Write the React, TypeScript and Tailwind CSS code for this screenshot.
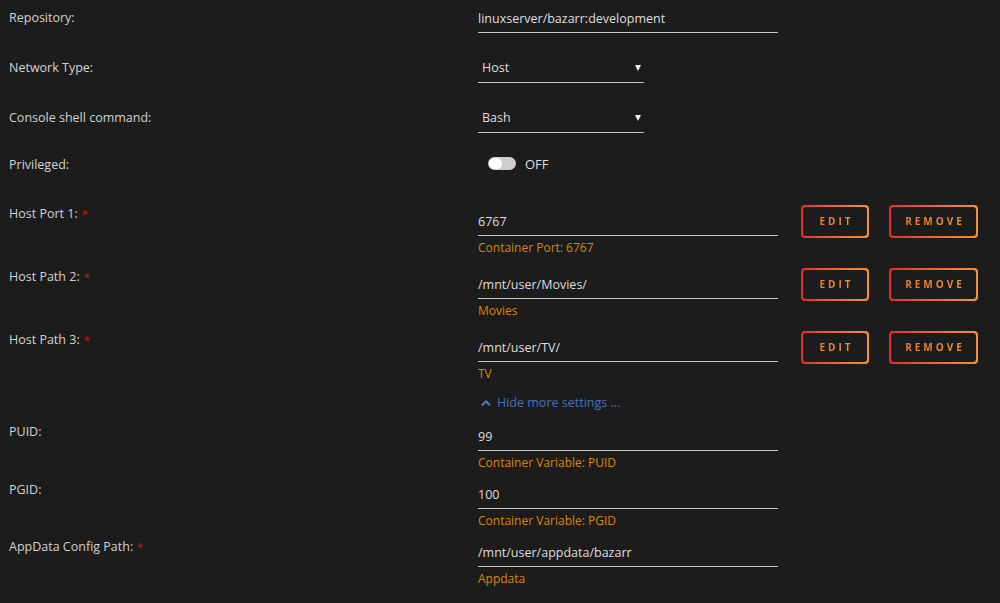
import React from 'react';
import { ChevronUp } from 'lucide-react';

const font = { fontFamily: '"Open Sans", "DejaVu Sans", sans-serif' };

const Label = ({ text, required, className = '' }: { text: string; required?: boolean; className?: string }) => (
  <div className={`w-[478px] shrink-0 pl-[9px] text-[12.5px] leading-[18px] text-[#d2d2d2] ${className}`}>
    {text}
    {required && <span className="ml-[4px] align-top text-[11px] text-[#d11a1a]">*</span>}
  </div>
);

const Field = ({ value, width = 'w-[300px]', hint }: { value: string; width?: string; hint?: string }) => (
  <div className={`${width} shrink-0`}>
    <div className="h-[33px] border-b border-[#c4c4c4] pt-[10px] text-[12.5px] leading-[18px] text-[#dedede]">{value}</div>
    {hint && <div className="mt-[4px] h-[16px] text-[12px] leading-[16px] text-[#d9860b]">{hint}</div>}
  </div>
);

const Select = ({ value }: { value: string }) => (
  <div className="flex h-[33px] w-[166px] shrink-0 items-center justify-between border-b border-[#c4c4c4] pl-[4px] pr-[3px] pt-[5px] text-[12.5px] text-[#dedede]">
    <span>{value}</span>
    <svg width="6" height="6" viewBox="0 0 6 6" className="mb-[2px]">
      <polygon points="0,0 6,0 3,6" fill="#f2f2f2" />
    </svg>
  </div>
);

const OutlineButton = ({ text, width }: { text: string; width: string }) => (
  <div className={`${width} mt-[2px] h-[33px] rounded-[4px] bg-gradient-to-r from-[#e22a2a] to-[#f7922f] p-[2px]`}>
    <div className="flex h-full w-full items-center justify-center rounded-[3px] bg-[#1c1c1c]">
      <span className="bg-gradient-to-r from-[#ee7a2d] to-[#f3912f] bg-clip-text pl-[3px] text-[10px] font-bold tracking-[3px] text-transparent">
        {text}
      </span>
    </div>
  </div>
);

const PortRow = ({ label, value, hint, top }: { label: string; value: string; hint: string; top: string }) => (
  <div className={`flex ${top}`}>
    <Label text={label} required className="pt-[2px]" />
    <Field value={value} hint={hint} />
    <div className="ml-[23px] flex gap-[20px]">
      <OutlineButton text="EDIT" width="w-[68px]" />
      <OutlineButton text="REMOVE" width="w-[89px]" />
    </div>
  </div>
);

export default function App() {
  return (
    <div className="min-h-screen w-[1000px] bg-[#1c1c1c]" style={font}>
      <div className="flex flex-col">
        <div className="flex">
          <Label text="Repository:" className="pt-[9px]" />
          <Field value="linuxserver/bazarr:development" />
        </div>
        <div className="mt-[17px] flex">
          <Label text="Network Type:" className="pt-[9px]" />
          <Select value="Host" />
        </div>
        <div className="mt-[17px] flex">
          <Label text="Console shell command:" className="pt-[9px]" />
          <Select value="Bash" />
        </div>
        <div className="mt-[17px] flex h-[28px] items-center">
          <Label text="Privileged:" className="pt-[2px]" />
          <div className="ml-[10px] flex items-center gap-[9px] pb-[2px]">
            <div className="flex h-[13px] w-[28px] items-center rounded-full bg-[#cfcfcf] p-[1px]">
              <div className="h-[11px] w-[13px] rounded-full bg-white" />
            </div>
            <span className="pt-[4px] text-[13px] text-[#dedede]">OFF</span>
          </div>
        </div>
        <PortRow label="Host Port 1:" value="6767" hint="Container Port: 6767" top="mt-[25px]" />
        <PortRow label="Host Path 2:" value="/mnt/user/Movies/" hint="Movies" top="mt-[10px]" />
        <PortRow label="Host Path 3:" value="/mnt/user/TV/" hint="TV" top="mt-[10px]" />
        <div className="mt-[12px] flex">
          <div className="w-[478px] shrink-0" />
          <div className="flex items-center gap-[4px] pl-[1px] text-[12.5px] leading-[18px] text-[#4b71b8]">
            <ChevronUp size={14} strokeWidth={4} />
            <span>Hide more settings ...</span>
          </div>
        </div>
        <div className="mt-[6px] flex">
          <Label text="PUID:" className="pt-[5px]" />
          <Field value="99" hint="Container Variable: PUID" />
        </div>
        <div className="mt-[5px] flex">
          <Label text="PGID:" className="pt-[5px]" />
          <Field value="100" hint="Container Variable: PGID" />
        </div>
        <div className="mt-[5px] flex">
          <Label text="AppData Config Path:" required className="pt-[4px]" />
          <Field value="/mnt/user/appdata/bazarr" hint="Appdata" />
        </div>
      </div>
    </div>
  );
}
